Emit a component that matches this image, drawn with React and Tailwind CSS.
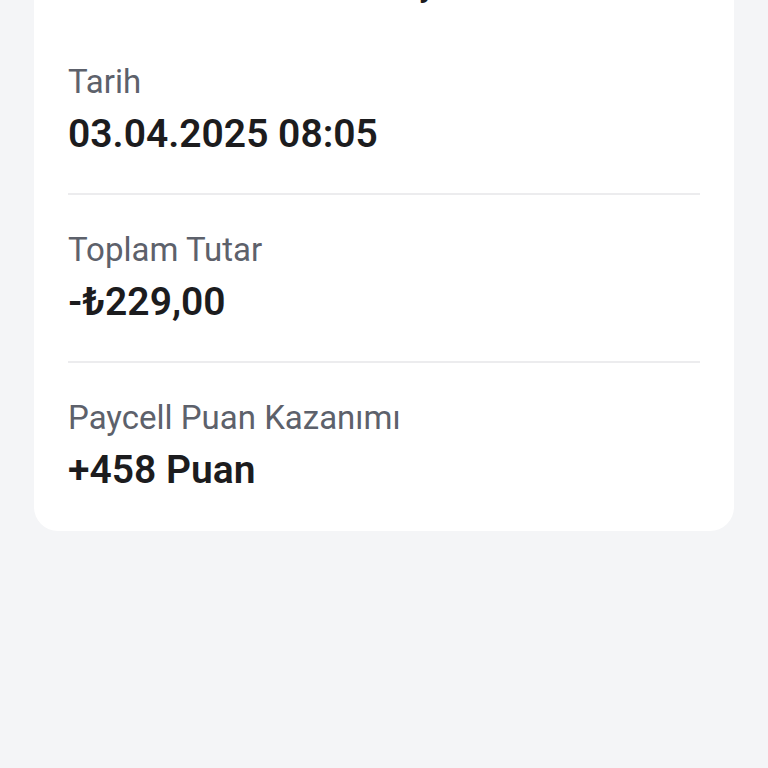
export default function App() {
  const rows = [
    { label: 'Tarih', value: '03.04.2025 08:05' },
    { label: 'Toplam Tutar', value: '-₺229,00' },
    { label: 'Paycell Puan Kazanımı', value: '+458 Puan' },
  ];
  return (
    <div className="min-h-screen bg-[#f4f5f7] px-[34px] font-['Roboto',sans-serif] overflow-hidden">
      <div className="-mt-[34px] rounded-b-3xl bg-white px-[34px] pb-[37px]">
        <div className="pl-5 text-center text-[32px] leading-[40px] font-semibold text-[#1c1c1e]">Detay</div>
        <div className="mt-[56px]">
          {rows.map((row, i) => (
            <div key={row.label}>
              {i > 0 && <div className="my-[35px] h-[2px] bg-[#ececee]" />}
              <div className="text-[33px] leading-[40px] text-[#5d616b]">{row.label}</div>
              <div className="mt-2 text-[39px] leading-[48px] font-semibold text-[#1c1c1e]">{row.value}</div>
            </div>
          ))}
        </div>
      </div>
    </div>
  );
}
